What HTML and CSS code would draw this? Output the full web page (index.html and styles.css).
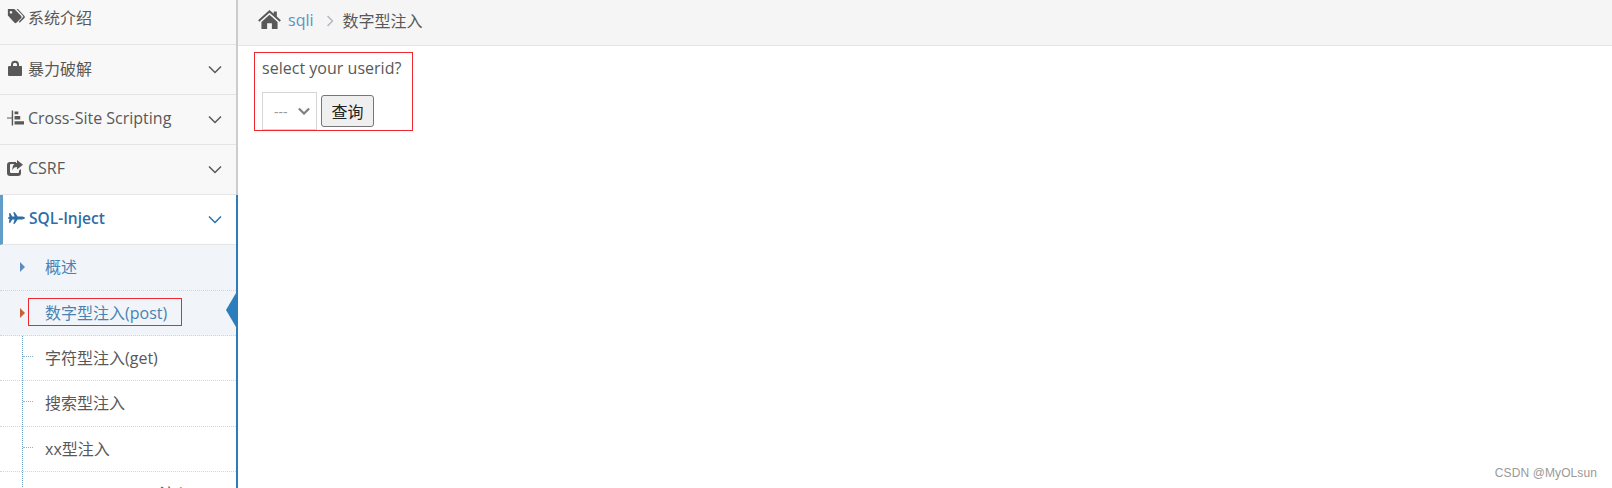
FILE: index.html
```html
<!DOCTYPE html>
<html lang="zh-CN">
<head>
    <meta charset="UTF-8">
    <title>sqli - 数字型注入</title>
    <link rel="stylesheet" href="styles.css">
</head>
<body>
    <div class="layout">
        <!-- Sidebar -->
        <div class="sidebar">
            <div class="nav-group">
                <div class="nav-item first">
                    <svg class="nav-icon tags" viewBox="0 0 22 18"><path d="M1 1h7.500l8 8a1.600 1.600 0 0 1 0 2.200l-5.600 5.600a1.600 1.600 0 0 1-2.200 0L1 8.500zM4.600 3.200a1.500 1.500 0 1 0 .01 0z" fill-rule="evenodd"/><path d="M11 1h1.600l7.600 8a1.600 1.600 0 0 1 0 2.200l-5.600 5.600-1-1 5-5.500a1 1 0 0 0 0-1.300z"/></svg>
                    <span class="nav-label tight">系统介绍</span>
                </div>
                <div class="nav-item">
                    <svg class="nav-icon" viewBox="0 0 16 16"><path d="M4 6V4.800a4 4 0 0 1 8 0V6h1.500A1 1 0 0 1 15 7v8a1 1 0 0 1-1 1H2a1 1 0 0 1-1-1V7a1 1 0 0 1 1-1zm2 0h4V4.800a2 2 0 0 0-4 0z" fill-rule="evenodd"/></svg>
                    <span class="nav-label">暴力破解</span>
                    <svg class="chevron" viewBox="0 0 14 9"><path d="M1 1.500l6 6 6-6"/></svg>
                </div>
                <div class="nav-item">
                    <svg class="nav-icon sitemap" viewBox="0 0 18 16"><path d="M0 7.500h5v1H0zM5 0h1.500v16H5zM8 1h4v3H8zM8 6h6v3.500H8zM8 11.500h10V15H8z"/></svg>
                    <span class="nav-label">Cross-Site Scripting</span>
                    <svg class="chevron" viewBox="0 0 14 9"><path d="M1 1.500l6 6 6-6"/></svg>
                </div>
                <div class="nav-item">
                    <svg class="nav-icon" viewBox="0 0 16 16"><path d="M3 2h6v2H4a1 1 0 0 0-1 1v7a1 1 0 0 0 1 1h7a1 1 0 0 0 1-1v-1.500l2-1.500V13a3 3 0 0 1-3 3H3a3 3 0 0 1-3-3V5a3 3 0 0 1 3-3z"/><path d="M10 0l6 4.800-6 4.800V7C7.500 7 6 8 5.500 10.500 5 6 7 3 10 2.700z"/></svg>
                    <span class="nav-label">CSRF</span>
                    <svg class="chevron" viewBox="0 0 14 9"><path d="M1 1.500l6 6 6-6"/></svg>
                </div>
            </div>
            <div class="nav-group open-group">
                <div class="nav-item active">
                    <svg class="nav-icon" viewBox="0 0 18 12"><path d="M1 1h1.500l2 3.500H7L5.500 0h1.700l3 4.500H15c1.500.3 3 .9 3 1.500s-1.500 1.200-3 1.500h-4.800l-3 4.500H5.500L7 7.500H4.500l-2 3.500H1l.5-4L0 6.500v-1L1.500 5z"/></svg>
                    <span class="nav-label">SQL-Inject</span>
                    <svg class="chevron" viewBox="0 0 14 9"><path d="M1 1.500l6 6 6-6"/></svg>
                </div>
                <ul class="submenu">
                    <li class="sub-item open"><span class="caret"></span>概述</li>
                    <li class="sub-item open current">
                        <span class="caret"></span>数字型注入(post)
                        <span class="mark"></span>
                    </li>
                    <li class="sub-item">字符型注入(get)</li>
                    <li class="sub-item">搜索型注入</li>
                    <li class="sub-item">xx型注入</li>
                    <li class="sub-item">"insert/update"注入</li>
                </ul>
            </div>
        </div>

        <!-- Content -->
        <div class="main">
            <div class="breadcrumbs">
                <svg class="home" viewBox="0 0 24 20"><path d="M12 0l4.500 4V1.500h3.200v5.400L24 10.800l-1.300 1.500L12 2.800 1.300 12.300 0 10.800z"/><path d="M12 5l8.500 7.500V20h-6v-6h-5v6h-6v-7.500z"/></svg>
                <a class="crumb-link">sqli</a>
                <svg class="crumb-sep" viewBox="0 0 6 12"><path d="M.5 1l5 5-5 5"/></svg>
                <span>数字型注入</span>
            </div>
            <div class="page-content">
                <div class="query-box">
                    <p>select your userid?</p>
                    <div class="query-row">
                        <div class="fake-select">
                            <span>---</span>
                            <svg viewBox="0 0 14 9"><path d="M1 1.500l6 6 6-6"/></svg>
                        </div>
                        <button type="button">查询</button>
                    </div>
                </div>
            </div>
            <div class="watermark">CSDN @MyOLsun</div>
        </div>
    </div>
</body>
</html>
```

FILE: styles.css
```css
html, body {
    margin: 0;
    height: 488px;
    overflow: hidden;
    background: #fff;
}
body {
    font-family: "Open Sans", "Noto Sans CJK SC", sans-serif;
    font-size: 16px;
    color: #585858;
}
.layout {
    display: flex;
    height: 488px;
}
.sidebar {
    display: flex;
    flex-direction: column;
    width: 238px;
    flex-shrink: 0;
    overflow: hidden;
}
.nav-group {
    border-right: 2px solid #ccc;
}
.open-group {
    flex: 1;
    border-right-color: #2b7dbc;
}
.nav-item {
    position: relative;
    display: flex;
    align-items: center;
    box-sizing: border-box;
    height: 50px;
    padding: 0 0 3px 7px;
    background: #f8f8f8;
    border-bottom: 1px solid #e5e5e5;
}
.nav-item.first {
    height: 45px;
    align-items: flex-start;
}
.nav-item.first .nav-icon {
    margin-top: 8px;
}
.nav-item.first .nav-label {
    margin-top: 5px;
}
.nav-icon {
    width: 16px;
    height: 16px;
    fill: #585858;
    flex-shrink: 0;
    margin-right: 5px;
}
.tags {
    width: 19px;
    margin-right: 2px;
}
.sitemap {
    width: 17px;
    margin-right: 4px;
}
.nav-label {
    flex: 1;
}
.chevron {
    width: 14px;
    height: 9px;
    margin: 3px 14px 0 0;
    fill: none;
    stroke: #585858;
    stroke-width: 1.5;
}
.nav-item.active {
    background: #fff;
    color: #2b6ea8;
    font-size: 15.5px;
    font-weight: 600;
    padding-left: 5px;
    border-left: 3px solid #629cc9;
}
.nav-item.active .nav-icon {
    width: 17px;
    margin-right: 4px;
    fill: #2b6ea8;
}
.nav-item.active .chevron {
    stroke: #2b6ea8;
}
.submenu {
    position: relative;
    margin: 0;
    padding: 0;
    list-style: none;
}
.submenu::before {
    content: "";
    position: absolute;
    left: 22px;
    top: 0;
    bottom: 0;
    border-left: 1px dotted #6a9cc4;
}
.sub-item {
    position: relative;
    box-sizing: border-box;
    height: 45.2px;
    line-height: 44px;
    padding-left: 45px;
    border-bottom: 1px dotted #d5d5d5;
    white-space: nowrap;
}
.sub-item:first-child {
    height: 46px;
}
.sub-item::before {
    content: "";
    position: absolute;
    left: 23px;
    top: 20px;
    width: 10px;
    border-top: 1px dotted #8db3d2;
}
.sub-item.open {
    background: #f1f5f9;
    color: #4a82b4;
}
.sub-item.open::before {
    display: none;
}
.caret {
    position: absolute;
    left: 20px;
    top: 17px;
    border-left: 5px solid #5b8dc0;
    border-top: 5px solid transparent;
    border-bottom: 5px solid transparent;
}
.current .caret {
    border-left-color: #c8603a;
}
.current::after {
    content: "";
    position: absolute;
    right: 0;
    top: 2px;
    border-right: 10px solid #2b7dbc;
    border-top: 17px solid transparent;
    border-bottom: 17px solid transparent;
}
.mark {
    position: absolute;
    left: 28px;
    top: 7px;
    width: 152px;
    height: 26px;
    border: 1px solid #f0282d;
}
.main {
    position: relative;
    flex: 1;
}
.breadcrumbs {
    display: flex;
    align-items: center;
    box-sizing: border-box;
    height: 46px;
    padding: 0 0 6px 20px;
    background: #f5f5f5;
    border-bottom: 1px solid #e5e5e5;
}
.home {
    width: 23px;
    height: 19px;
    fill: #585858;
    margin-right: 7px;
}
.crumb-link {
    color: #5a93bd;
}
.crumb-sep {
    width: 6px;
    height: 12px;
    margin: 3px 10px 0 13px;
    fill: none;
    stroke: #b2b6bf;
    stroke-width: 1.5;
}
.page-content {
    padding: 6px 0 0 16px;
}
.query-box {
    width: 157px;
    height: 77px;
    border: 1px solid #f0282d;
}
.query-box p {
    margin: 0;
    padding: 4px 0 0 7px;
    line-height: 22px;
    letter-spacing: 0.02px;
}
.query-row {
    display: flex;
    align-items: center;
    margin-top: 13px;
    padding-left: 7px;
}
.fake-select {
    display: flex;
    align-items: center;
    justify-content: space-between;
    box-sizing: border-box;
    width: 55px;
    height: 38px;
    padding: 0 6px 0 11px;
    border: 1px solid #d5d5d5;
    color: #999;
    font-size: 14px;
}
.fake-select svg {
    width: 12px;
    height: 8px;
    fill: none;
    stroke: #808080;
    stroke-width: 2.5;
}
button {
    width: 53px;
    height: 32px;
    margin-left: 4px;
    padding: 0;
    background: #efefef;
    border: 1px solid #767676;
    border-radius: 3px;
    font-family: "Noto Sans CJK SC", sans-serif;
    font-size: 16px;
    color: #222;
}
.watermark {
    position: absolute;
    right: 15px;
    bottom: 8px;
    font-family: "Liberation Sans", sans-serif;
    font-size: 12px;
    letter-spacing: 0.1px;
    color: #999;
}
```
